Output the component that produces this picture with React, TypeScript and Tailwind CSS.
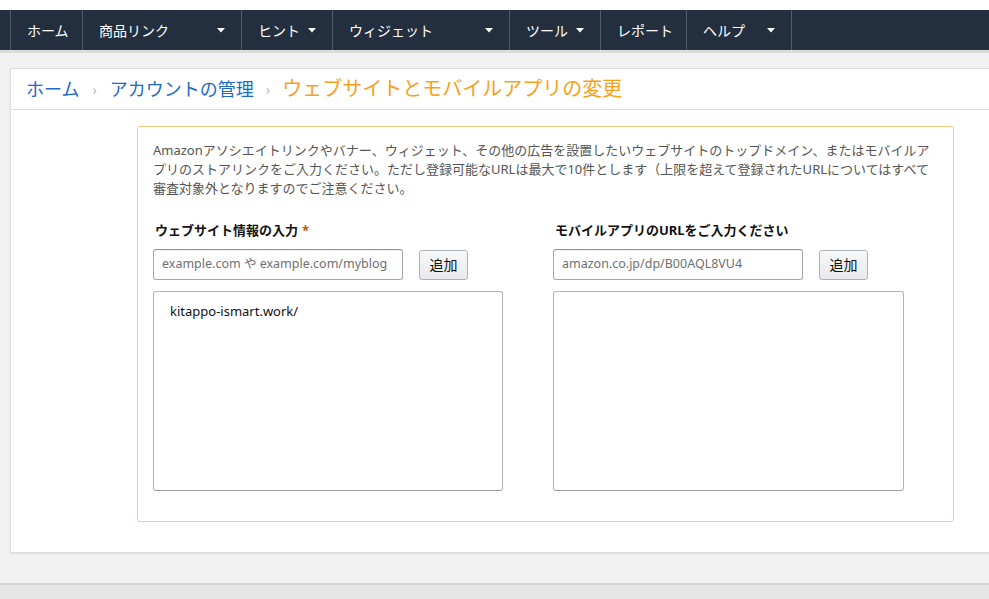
import React from "react";

const Caret = () => (
  <svg width="8" height="5" viewBox="0 0 8 5" className="shrink-0">
    <path d="M0 0 L8 0 L4 4.5 Z" fill="#ffffff" />
  </svg>
);

const navItems: { label: string; w: string; caret: boolean }[] = [
  { label: "ホーム", w: "w-[72px]", caret: false },
  { label: "商品リンク", w: "w-[159px]", caret: true },
  { label: "ヒント", w: "w-[91px]", caret: true },
  { label: "ウィジェット", w: "w-[177px]", caret: true },
  { label: "ツール", w: "w-[91px]", caret: true },
  { label: "レポート", w: "w-[86px]", caret: false },
  { label: "ヘルプ", w: "w-[105px]", caret: true },
];

const Column = ({
  label,
  required,
  placeholder,
  value,
  areaWidth,
}: {
  label: string;
  required?: boolean;
  placeholder: string;
  value?: string;
  areaWidth: string;
}) => (
  <div className="flex w-[400px] shrink-0 flex-col">
    <div className="flex h-[20px] items-center whitespace-nowrap pl-[2px] text-[13px] font-bold text-[#111]">
      {label}
      {required && <span className="ml-[4px] text-[#c45500]">*</span>}
    </div>
    <div className="mt-[8px] flex items-center">
      <div className="flex h-[31px] w-[250px] shrink-0 items-center overflow-hidden whitespace-nowrap rounded-[3px] border border-[#a6a6a6] border-t-[#949494] bg-white px-[8px] text-[12.5px] text-[#6f6f6f] shadow-[inset_0_1px_0_rgba(0,0,0,0.07)]">
        {placeholder}
      </div>
      <div className="ml-[16px] flex h-[30px] w-[49px] shrink-0 items-center justify-center rounded-[3px] border border-[#adb1b8] bg-gradient-to-b from-[#f7f8fa] to-[#e7e9ec] text-[14px] text-[#111]">
        追加
      </div>
    </div>
    <div
      className={`mt-[11px] h-[200px] ${areaWidth} shrink-0 rounded-[3px] border border-[#b5b5b5] border-b-[#a0a0a0] bg-white px-[16px] py-[10px] text-[13px] text-[#111]`}
    >
      {value}
    </div>
  </div>
);

export default function App() {
  return (
    <div
      className="flex h-[599px] w-[989px] flex-col overflow-hidden bg-[#f2f2f2]"
      style={{ fontFamily: '"Noto Sans", "Noto Sans CJK JP", sans-serif' }}
    >
      <div className="h-[10px] shrink-0 bg-white" />
      <div className="flex h-[40px] shrink-0 bg-[#232f3e] pl-[10px] text-white">
        <div className="flex border-l border-[#4d5b6c]">
          {navItems.map((n) => (
            <div
              key={n.label}
              className={`flex ${n.w} shrink-0 items-center justify-between whitespace-nowrap border-r border-[#4d5b6c] pl-[16px] pr-[16px] text-[14px]`}
            >
              <span>{n.label}</span>
              {n.caret && <Caret />}
            </div>
          ))}
        </div>
      </div>
      <div className="h-[3px] shrink-0 bg-[#dcdcdc]" />
      <div className="mt-[15px] ml-[10px] mr-[-20px] flex h-[485px] shrink-0 flex-col border border-[#dddddd] bg-white shadow-[0_1px_2px_rgba(0,0,0,0.08)]">
        <div className="flex h-[41px] shrink-0 items-center whitespace-nowrap border-b border-[#dddddd] pl-[15px]">
          <span className="text-[18px] text-[#1b6ac9]">ホーム</span>
          <span className="mx-[13px] text-[14px] text-[#bbbbbb]">›</span>
          <span className="text-[18px] text-[#1b6ac9]">アカウントの管理</span>
          <span className="mx-[12px] text-[14px] text-[#bbbbbb]">›</span>
          <span className="text-[20px] text-[#f7a11b]">ウェブサイトとモバイルアプリの変更</span>
        </div>
        <div className="pl-[126px] pt-[16px]">
          <div className="h-[396px] w-[817px] rounded-[3px] border border-[#f7cb7f] px-[15px] pt-[14px]">
            <div className="whitespace-nowrap text-[13px] leading-[19px] text-[#555555]">
              <div>
                Amazonアソシエイトリンクやバナー、ウィジェット、その他の広告を設置したいウェブサイトのトップドメイン、またはモバイルア
              </div>
              <div>
                プリのストアリンクをご入力ください。ただし登録可能なURLは最大で10件とします（上限を超えて登録されたURLについてはすべて
              </div>
              <div>審査対象外となりますのでご注意ください。</div>
            </div>
            <div className="mt-[23px] flex">
              <Column
                label="ウェブサイト情報の入力"
                required
                placeholder="example.com や example.com/myblog"
                value="kitappo-ismart.work/"
                areaWidth="w-[350px]"
              />
              <Column
                label="モバイルアプリのURLをご入力ください"
                placeholder="amazon.co.jp/dp/B00AQL8VU4"
                areaWidth="w-[351px]"
              />
            </div>
          </div>
        </div>
      </div>
      <div className="mt-[30px] h-[2px] shrink-0 bg-[#d5d5d5]" />
      <div className="flex-1 bg-[#e6e6e6]" />
    </div>
  );
}
